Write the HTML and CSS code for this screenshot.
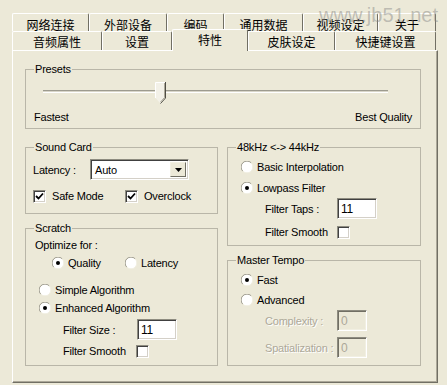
FILE: index.html
```html
<!DOCTYPE html>
<html lang="zh">
<head>
    <meta charset="UTF-8">
    <title>特性</title>
    <link rel="stylesheet" href="styles.css">
</head>
<body>
    <div class="window">
        <div class="watermark">www.jb51.net</div>
        <div class="tabs">
            <div class="tab-row back">
                <div class="tab t-net">网络连接</div>
                <div class="tab t-ext">外部设备</div>
                <div class="tab t-enc">编码</div>
                <div class="tab t-data">通用数据</div>
                <div class="tab t-video">视频设定</div>
                <div class="tab t-about">关于</div>
            </div>
            <div class="tab-row front">
                <div class="tab t-audio">音频属性</div>
                <div class="tab t-set">设置</div>
                <div class="tab t-feat active">特性</div>
                <div class="tab t-skin">皮肤设定</div>
                <div class="tab t-keys">快捷键设置</div>
            </div>
        </div>
        <div class="page">
            <div class="group presets">
                <div class="group-title">Presets</div>
                <div class="slider">
                    <div class="track"></div>
                    <svg class="thumb" width="11" height="22" viewBox="0 0 11 22">
                        <polygon points="0.5,0.5 10.5,0.5 10.5,16 5.5,21.5 0.5,16" fill="#F3F1E8"/>
                        <polyline points="0.5,16 0.5,0.5 10,0.5" fill="none" stroke="#fff"/>
                        <polyline points="10.5,0 10.5,16 5.5,21.5" fill="none" stroke="#4F4D45"/>
                        <polyline points="9.5,1 9.5,15.5 5.5,20" fill="none" stroke="#ACA899"/>
                    </svg>
                </div>
                <div class="scale">
                    <span>Fastest</span>
                    <span>Best Quality</span>
                </div>
            </div>

            <div class="columns">
                <div class="col col-left">
                    <div class="group sound">
                        <div class="group-title">Sound Card</div>
                        <div class="row latency">
                            <span class="label-latency">Latency :</span>
                            <div class="select">
                                <span class="select-text">Auto</span>
                                <span class="select-btn">
                                    <svg width="7" height="4" viewBox="0 0 7 4"><polygon points="0,0 7,0 3.5,4" fill="#000"/></svg>
                                </span>
                            </div>
                        </div>
                        <div class="row checks">
                            <div class="check-item first">
                                <span class="checkbox"><svg width="9" height="9" viewBox="0 0 9 9"><polyline points="1,4 3.5,6.5 8,1.5" fill="none" stroke="#000" stroke-width="1.8"/></svg></span>
                                <span>Safe Mode</span>
                            </div>
                            <div class="check-item">
                                <span class="checkbox"><svg width="9" height="9" viewBox="0 0 9 9"><polyline points="1,4 3.5,6.5 8,1.5" fill="none" stroke="#000" stroke-width="1.8"/></svg></span>
                                <span>Overclock</span>
                            </div>
                        </div>
                    </div>

                    <div class="group scratch">
                        <div class="group-title">Scratch</div>
                        <div class="row line">Optimize for :</div>
                        <div class="row line optimize">
                            <div class="radio-item quality">
                                <svg class="radio" width="12" height="12" viewBox="0 0 12 12"><circle cx="6" cy="6" r="5.5" fill="#fff"/><path d="M1.8,10.2 A5.5,5.5 0 0 1 10.2,1.8" fill="none" stroke="#9A988C"/><path d="M10.2,1.8 A5.5,5.5 0 0 1 1.8,10.2" fill="none" stroke="#F1EFE2"/><circle cx="6" cy="6" r="2" fill="#000"/></svg>
                                <span>Quality</span>
                            </div>
                            <div class="radio-item">
                                <svg class="radio" width="12" height="12" viewBox="0 0 12 12"><circle cx="6" cy="6" r="5.5" fill="#fff"/><path d="M1.8,10.2 A5.5,5.5 0 0 1 10.2,1.8" fill="none" stroke="#9A988C"/><path d="M10.2,1.8 A5.5,5.5 0 0 1 1.8,10.2" fill="none" stroke="#F1EFE2"/></svg>
                                <span>Latency</span>
                            </div>
                        </div>
                        <div class="row line algo simple">
                            <svg class="radio" width="12" height="12" viewBox="0 0 12 12"><circle cx="6" cy="6" r="5.5" fill="#fff"/><path d="M1.8,10.2 A5.5,5.5 0 0 1 10.2,1.8" fill="none" stroke="#9A988C"/><path d="M10.2,1.8 A5.5,5.5 0 0 1 1.8,10.2" fill="none" stroke="#F1EFE2"/></svg>
                            <span>Simple Algorithm</span>
                        </div>
                        <div class="row line algo enhanced">
                            <svg class="radio" width="12" height="12" viewBox="0 0 12 12"><circle cx="6" cy="6" r="5.5" fill="#fff"/><path d="M1.8,10.2 A5.5,5.5 0 0 1 10.2,1.8" fill="none" stroke="#9A988C"/><path d="M10.2,1.8 A5.5,5.5 0 0 1 1.8,10.2" fill="none" stroke="#F1EFE2"/><circle cx="6" cy="6" r="2" fill="#000"/></svg>
                            <span>Enhanced Algorithm</span>
                        </div>
                        <div class="row field scratch-size">
                            <span class="field-label size-label">Filter Size :</span>
                            <span class="input wide">11</span>
                        </div>
                        <div class="row line scratch-smooth">
                            <span class="field-label smooth-label">Filter Smooth</span>
                            <span class="checkbox"></span>
                        </div>
                    </div>
                </div>

                <div class="col col-right">
                    <div class="group resample">
                        <div class="group-title">48kHz &lt;-&gt; 44kHz</div>
                        <div class="row line">
                            <svg class="radio" width="12" height="12" viewBox="0 0 12 12"><circle cx="6" cy="6" r="5.5" fill="#fff"/><path d="M1.8,10.2 A5.5,5.5 0 0 1 10.2,1.8" fill="none" stroke="#9A988C"/><path d="M10.2,1.8 A5.5,5.5 0 0 1 1.8,10.2" fill="none" stroke="#F1EFE2"/></svg>
                            <span>Basic Interpolation</span>
                        </div>
                        <div class="row line lowpass">
                            <svg class="radio" width="12" height="12" viewBox="0 0 12 12"><circle cx="6" cy="6" r="5.5" fill="#fff"/><path d="M1.8,10.2 A5.5,5.5 0 0 1 10.2,1.8" fill="none" stroke="#9A988C"/><path d="M10.2,1.8 A5.5,5.5 0 0 1 1.8,10.2" fill="none" stroke="#F1EFE2"/><circle cx="6" cy="6" r="2" fill="#000"/></svg>
                            <span>Lowpass Filter</span>
                        </div>
                        <div class="row field taps">
                            <span class="field-label right-label">Filter Taps :</span>
                            <span class="input wide">11</span>
                        </div>
                        <div class="row line taps-smooth">
                            <span class="field-label right-label">Filter Smooth</span>
                            <span class="checkbox"></span>
                        </div>
                    </div>

                    <div class="group tempo">
                        <div class="group-title">Master Tempo</div>
                        <div class="row line">
                            <svg class="radio" width="12" height="12" viewBox="0 0 12 12"><circle cx="6" cy="6" r="5.5" fill="#fff"/><path d="M1.8,10.2 A5.5,5.5 0 0 1 10.2,1.8" fill="none" stroke="#9A988C"/><path d="M10.2,1.8 A5.5,5.5 0 0 1 1.8,10.2" fill="none" stroke="#F1EFE2"/><circle cx="6" cy="6" r="2" fill="#000"/></svg>
                            <span>Fast</span>
                        </div>
                        <div class="row line advanced">
                            <svg class="radio" width="12" height="12" viewBox="0 0 12 12"><circle cx="6" cy="6" r="5.5" fill="#fff"/><path d="M1.8,10.2 A5.5,5.5 0 0 1 10.2,1.8" fill="none" stroke="#9A988C"/><path d="M10.2,1.8 A5.5,5.5 0 0 1 1.8,10.2" fill="none" stroke="#F1EFE2"/></svg>
                            <span>Advanced</span>
                        </div>
                        <div class="row field complexity">
                            <span class="field-label right-label disabled">Complexity :</span>
                            <span class="input narrow off">0</span>
                        </div>
                        <div class="row field spatial">
                            <span class="field-label right-label disabled">Spatialization :</span>
                            <span class="input narrow off">0</span>
                        </div>
                    </div>
                </div>
            </div>
        </div>
    </div>
</body>
</html>
```

FILE: styles.css
```css
body {
    margin: 0;
    padding: 0;
    background-color: #ECE9D8;
    font-family: "Liberation Sans", "Noto Sans CJK SC", sans-serif;
    font-size: 11px;
    letter-spacing: -0.2px;
    color: #000;
}
.window {
    position: relative;
    height: 385px;
    box-sizing: border-box;
    padding: 13px 10px 0 12px;
}
.watermark {
    position: absolute;
    top: 4px;
    right: 9px;
    font-family: "Liberation Sans", sans-serif;
    font-size: 20px;
    letter-spacing: 0;
    color: rgba(130, 130, 130, 0.45);
    z-index: 2;
}

/* tabs */
.tab-row {
    display: flex;
    width: 424px;
}
.tab-row.back {
    height: 18px;
}
.tab-row.front {
    height: 19px;
}
.tab {
    box-sizing: border-box;
    display: flex;
    align-items: center;
    justify-content: center;
    border-top: 1px solid #fff;
    border-left: 1px solid #fff;
    border-right: 1px solid #716F64;
    border-radius: 2px 2px 0 0;
    font-family: "Noto Sans CJK SC", sans-serif;
    font-size: 12px;
    letter-spacing: 0;
}
.back .tab {
    padding-top: 3px;
}
.t-net { width: 77px; }
.t-ext { width: 78px; }
.t-enc { width: 57px; }
.t-data { width: 79px; }
.t-video { width: 75px; }
.t-about { width: 58px; }
.t-audio { width: 90px; }
.t-set { width: 70px; }
.t-feat { width: 76px; }
.t-skin { width: 87px; }
.t-keys { width: 101px; }
.tab.active {
    position: relative;
    z-index: 1;
    height: 22px;
    margin-top: -2px;
    background-color: #ECE9D8;
    align-items: flex-start;
    padding-top: 1px;
}

/* page */
.page {
    box-sizing: border-box;
    width: 426px;
    height: 333px;
    border: 1px solid;
    border-color: #fff #716F64 #716F64 #fff;
    box-shadow: inset -1px -1px 0 #ACA899;
    padding: 18px 0 0 12px;
}
.group {
    position: relative;
    box-sizing: border-box;
    border: 1px solid #B9B6A8;
}
.group-title {
    position: absolute;
    top: -8px;
    left: 8px;
    padding: 0 1px;
    line-height: 14px;
    background-color: #ECE9D8;
    white-space: nowrap;
}

/* presets */
.presets {
    width: 396px;
    height: 60px;
    padding: 12px 8px 0 8px;
}
.slider {
    position: relative;
    box-sizing: border-box;
    height: 22px;
    padding-top: 8px;
    margin: 0 24px 0 9px;
}
.track {
    height: 1px;
    background-color: #D8D5C8;
    border-top: 1px solid #9D9B8F;
    border-bottom: 1px solid #fff;
}
.thumb {
    position: absolute;
    left: 112px;
    top: 0;
}
.scale {
    display: flex;
    justify-content: space-between;
    margin-top: 6px;
    line-height: 14px;
}

/* columns */
.columns {
    display: flex;
    gap: 9px;
    margin-top: 18px;
}
.col {
    display: flex;
    flex-direction: column;
    gap: 14px;
}
.col-left {
    width: 193px;
}
.col-right {
    width: 194px;
}
.row {
    display: flex;
    align-items: center;
    white-space: nowrap;
}
.row.line {
    height: 16px;
}
.row.field {
    height: 21px;
}

/* sound card */
.sound {
    height: 67px;
    padding: 11px 0 0 7px;
}
.latency {
    height: 21px;
}
.label-latency {
    width: 57px;
}
.select {
    box-sizing: border-box;
    display: flex;
    align-items: center;
    width: 99px;
    height: 21px;
    background-color: #fff;
    border: 1px solid;
    border-color: #8E8C80 #fff #fff #8E8C80;
    box-shadow: inset 1px 1px 0 #404040, inset -1px -1px 0 #D4D0C8;
    padding: 2px;
}
.select-text {
    flex: 1;
    padding-left: 2px;
}
.select-btn {
    box-sizing: border-box;
    display: flex;
    align-items: center;
    justify-content: center;
    width: 16px;
    height: 15px;
    background-color: #ECE9D8;
    border: 1px solid;
    border-color: #F1EFE2 #716F64 #716F64 #F1EFE2;
}
.checks {
    height: 20px;
    margin-top: 6px;
}
.check-item {
    display: flex;
    align-items: center;
}
.check-item.first {
    width: 92px;
}
.checkbox {
    box-sizing: border-box;
    display: inline-flex;
    align-items: center;
    justify-content: center;
    width: 13px;
    height: 13px;
    background-color: #fff;
    border: 1px solid;
    border-color: #8E8C80 #fff #fff #8E8C80;
    box-shadow: inset 1px 1px 0 #404040, inset -1px -1px 0 #D4D0C8;
}
.check-item .checkbox {
    margin-right: 6px;
}

/* radios */
.radio {
    flex: none;
    margin-right: 4px;
}
.radio-item {
    display: flex;
    align-items: center;
}
.radio-item.quality {
    width: 73px;
}

/* scratch */
.scratch {
    height: 138px;
    padding: 8px 0 0 9px;
}
.optimize {
    margin-top: 2px;
    padding-left: 17px;
}
.algo {
    padding-left: 4px;
}
.simple {
    margin-top: 11px;
}
.enhanced {
    margin-top: 2px;
}
.scratch-size {
    margin-top: 3px;
    padding-left: 28px;
}
.scratch-smooth {
    margin-top: 3px;
    padding-left: 28px;
}
.size-label {
    width: 74px;
}
.smooth-label {
    width: 73px;
}
.input {
    box-sizing: border-box;
    height: 21px;
    display: flex;
    align-items: center;
    padding-left: 3px;
    font-size: 12px;
    background-color: #fff;
    border: 1px solid;
    border-color: #8E8C80 #fff #fff #8E8C80;
    box-shadow: inset 1px 1px 0 #404040, inset -1px -1px 0 #D4D0C8;
}
.input.wide {
    width: 40px;
}
.input.narrow {
    width: 30px;
}
.input.off {
    background-color: #ECE9D8;
    color: #ACA899;
    box-shadow: inset 1px 1px 0 #716F64, inset -1px -1px 0 #F1EFE2;
}

/* right column */
.resample {
    height: 99px;
    padding: 11px 0 0 13px;
}
.lowpass {
    margin-top: 5px;
}
.taps {
    margin-top: 2px;
    padding-left: 24px;
}
.taps-smooth {
    margin-top: 5px;
    padding-left: 24px;
}
.right-label {
    width: 72px;
}
.tempo {
    height: 106px;
    padding: 11px 0 0 13px;
}
.advanced {
    margin-top: 4px;
}
.complexity {
    margin-top: 2px;
    padding-left: 24px;
}
.spatial {
    margin-top: 6px;
    padding-left: 24px;
}
.disabled {
    color: #ACA899;
    text-shadow: 1px 1px 0 #fff;
}
```
